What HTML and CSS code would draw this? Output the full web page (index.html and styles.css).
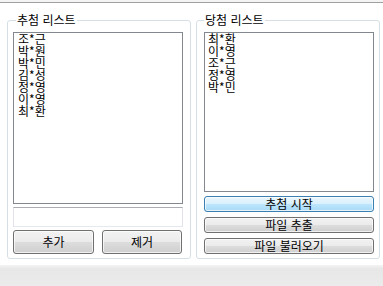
FILE: index.html
```html
<!DOCTYPE html>
<html lang="ko">
<head>
<meta charset="utf-8">
<title>추첨</title>
<link rel="stylesheet" href="styles.css">
</head>
<body>
<div class="window">
  <div class="topbar"></div>
  <div class="content">
    <fieldset class="group group-left">
      <legend class="legend legend-left">추첨 리스트</legend>
      <ul class="listbox listbox-left">
        <li>조*근</li>
        <li>박*원</li>
        <li>박*민</li>
        <li>김*성</li>
        <li>정*영</li>
        <li>이*영</li>
        <li>최*환</li>
      </ul>
      <div class="textbox"></div>
      <div class="btn-row">
        <button class="btn btn-add">추가</button>
        <button class="btn btn-remove">제거</button>
      </div>
    </fieldset>
    <fieldset class="group group-right">
      <legend class="legend legend-right">당첨 리스트</legend>
      <ul class="listbox listbox-right">
        <li>최*환</li>
        <li>이*영</li>
        <li>조*근</li>
        <li>정*영</li>
        <li>박*민</li>
      </ul>
      <button class="btn btn-wide btn-hot">추첨 시작</button>
      <button class="btn btn-wide">파일 추출</button>
      <button class="btn btn-wide">파일 불러오기</button>
    </fieldset>
  </div>
  <div class="statusbar"></div>
</div>
</body>
</html>
```
FILE: styles.css
```css
html, body {
  margin: 0;
  padding: 0;
}
body {
  width: 383px;
  height: 286px;
  overflow: hidden;
  background: #ffffff;
  font-family: "Noto Sans CJK KR", "Noto Sans", sans-serif;
  font-size: 12px;
  color: #000;
}
.window {
  display: flex;
  flex-direction: column;
  height: 286px;
}
.topbar {
  height: 2px;
  border-bottom: 1px solid #a0a0a0;
  background: #f4f4f4;
}
.content {
  display: flex;
  gap: 5px;
  padding: 10px 0 0 7px;
}
.group {
  box-sizing: border-box;
  margin: 0;
  height: 246px;
  border: 1px solid #d5dfe5;
  border-radius: 3px;
  display: flex;
  flex-direction: column;
  min-width: 0;
}
.group-left {
  width: 184px;
  padding: 5px 7px 4px 5px;
}
.group-right {
  width: 184px;
  padding: 5px 5px 4px 7px;
}
.legend {
  padding: 0 1px;
  font-size: 12px;
  line-height: 14px;
}
.legend-left {
  margin-left: 3px;
}
.legend-right {
  margin-left: 0;
}
.listbox {
  margin: 0;
  list-style: none;
  border: 1px solid #828790;
  background: #fff;
  line-height: 12px;
  font-size: 12px;
  flex: 1;
}
.listbox-left {
  padding: 0 0 0 4px;
}
.listbox-right {
  padding: 0 0 0 3px;
}
.textbox {
  box-sizing: border-box;
  height: 20px;
  margin-top: 3px;
  border: 1px solid;
  border-color: #abadb3 #e2e3ea #e3e9ef #e2e3ea;
  background: #fff;
}
.btn-row {
  display: flex;
  gap: 8px;
  margin-top: 3px;
}
.btn {
  box-sizing: border-box;
  font-family: inherit;
  font-size: 12px;
  line-height: 14px;
  color: #000;
  padding: 0;
  border: 1px solid #707070;
  border-radius: 3px;
  background: linear-gradient(#f2f2f2, #ebebeb 50%, #dddddd 50%, #cfcfcf);
  box-shadow: inset 0 0 0 1px rgba(255, 255, 255, 0.7);
}
.btn-add {
  width: 81px;
  height: 24px;
}
.btn-remove {
  width: 80px;
  height: 24px;
}
.btn-wide {
  width: 100%;
  height: 16px;
  margin-top: 5px;
}
.btn-hot {
  margin-top: 4px;
  border-color: #3c7fb1;
  background: linear-gradient(#eaf6fd, #d9f0fc 50%, #bee6fd 50%, #a7d9f5);
}
.statusbar {
  margin-top: auto;
  height: 21px;
  background: linear-gradient(#f4f4f4, #e7e7e7 4px, #ebebeb);
}
```
